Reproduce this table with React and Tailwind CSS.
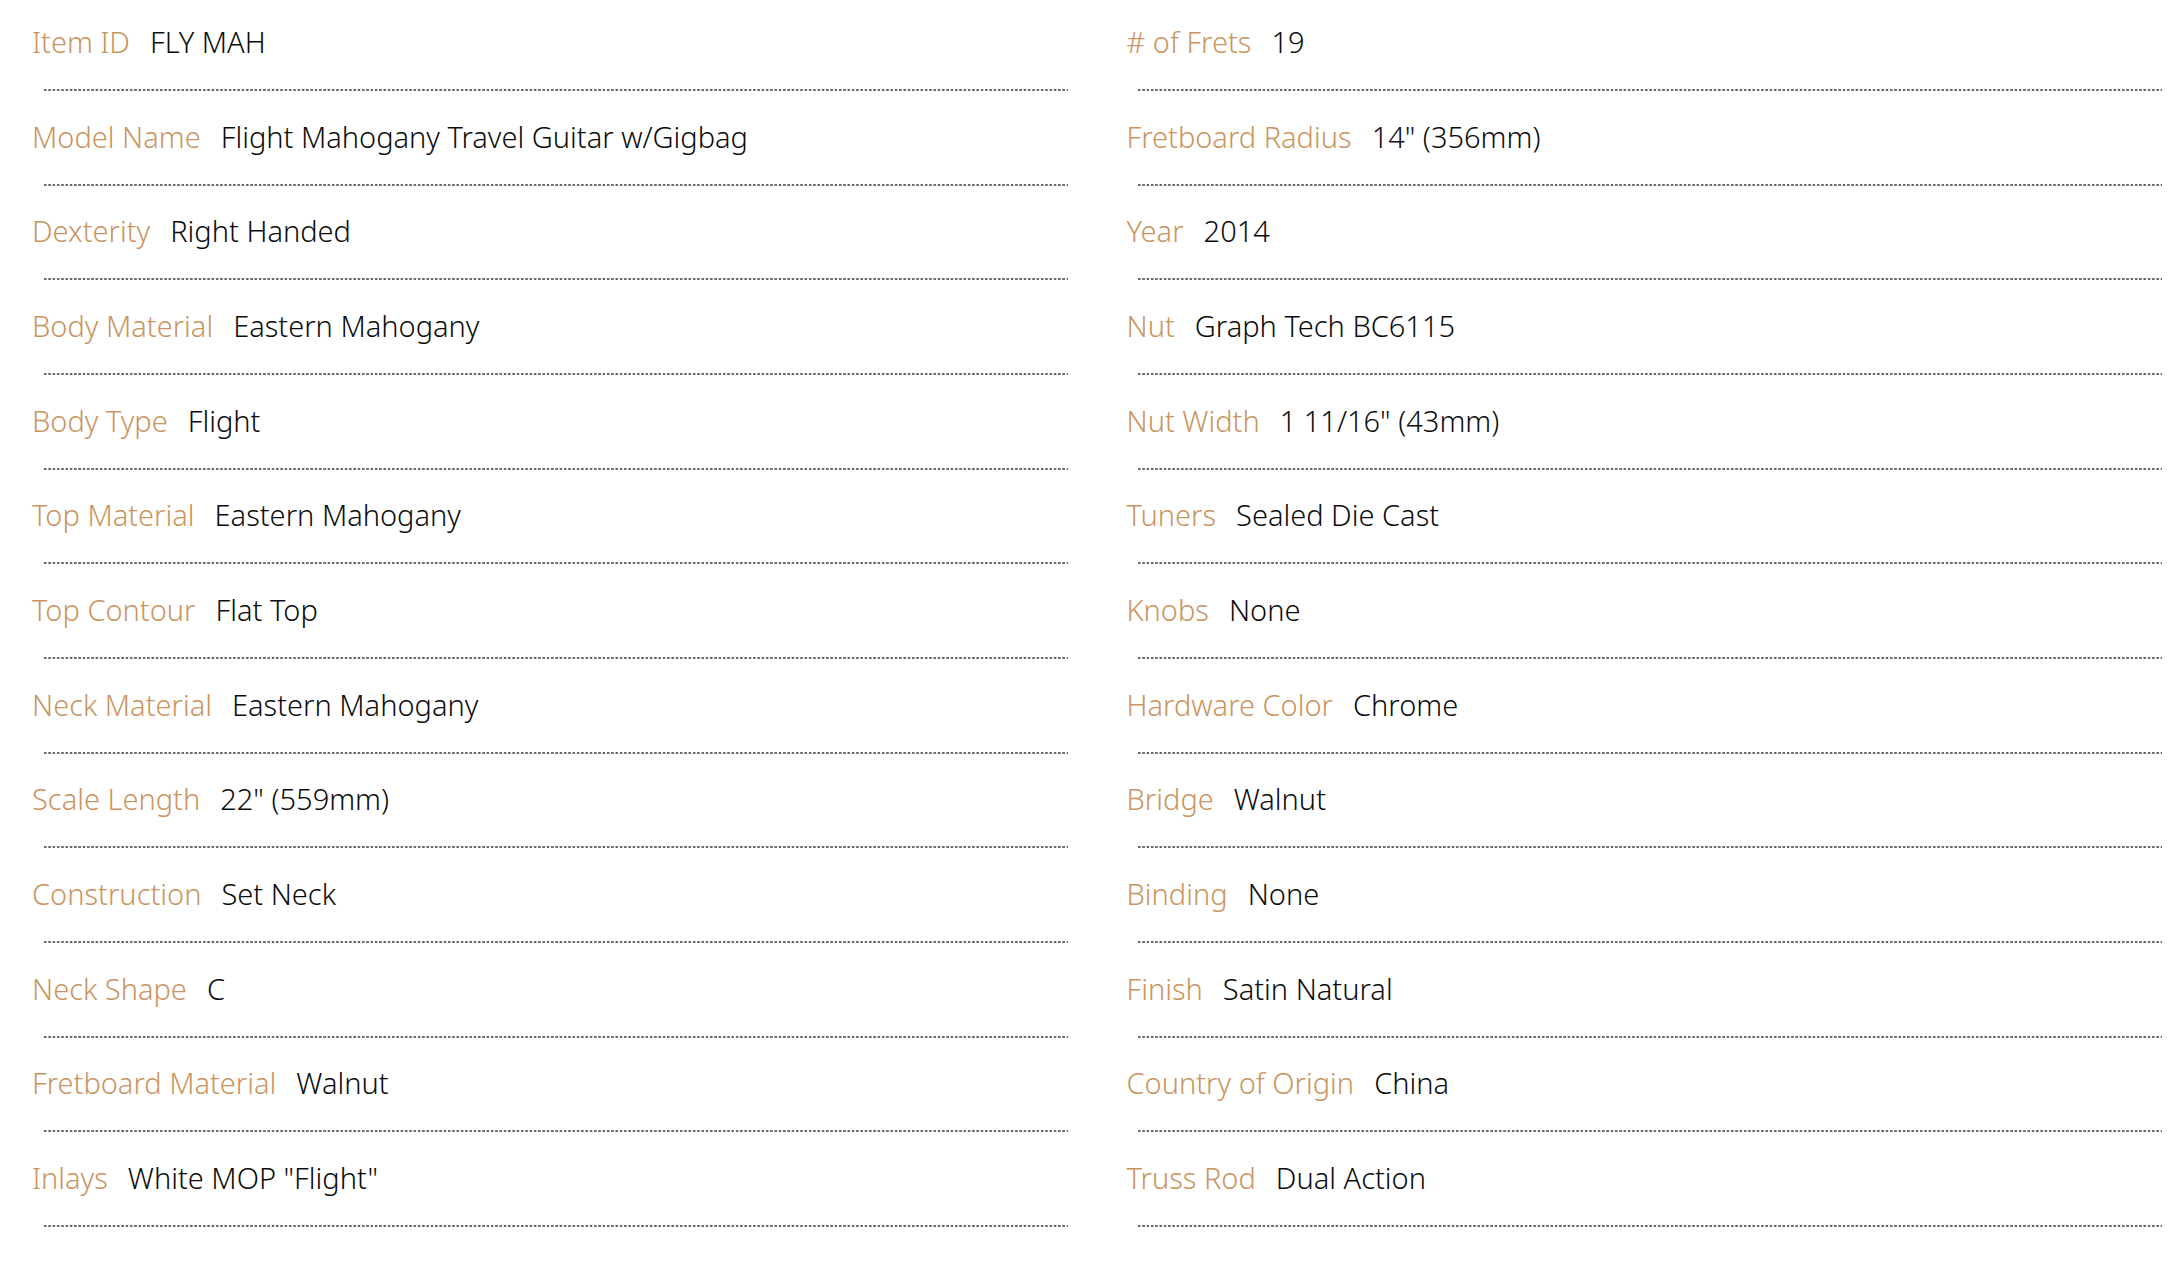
const left = [
  ["Item ID", "FLY MAH"],
  ["Model Name", "Flight Mahogany Travel Guitar w/Gigbag"],
  ["Dexterity", "Right Handed"],
  ["Body Material", "Eastern Mahogany"],
  ["Body Type", "Flight"],
  ["Top Material", "Eastern Mahogany"],
  ["Top Contour", "Flat Top"],
  ["Neck Material", "Eastern Mahogany"],
  ["Scale Length", "22\" (559mm)"],
  ["Construction", "Set Neck"],
  ["Neck Shape", "C"],
  ["Fretboard Material", "Walnut"],
  ["Inlays", "White MOP \"Flight\""],
];
const right = [
  ["# of Frets", "19"],
  ["Fretboard Radius", "14\" (356mm)"],
  ["Year", "2014"],
  ["Nut", "Graph Tech BC6115"],
  ["Nut Width", "1 11/16\" (43mm)"],
  ["Tuners", "Sealed Die Cast"],
  ["Knobs", "None"],
  ["Hardware Color", "Chrome"],
  ["Bridge", "Walnut"],
  ["Binding", "None"],
  ["Finish", "Satin Natural"],
  ["Country of Origin", "China"],
  ["Truss Rod", "Dual Action"],
];

function Row({ label, value, indent }) {
  return (
    <div className="flex flex-col">
      <div className="flex h-[40px] items-baseline whitespace-nowrap leading-[40px]">
        <span className="text-[29px] font-light text-[#c9955f]">{label}</span>
        <span className="ml-[20px] text-[29px] font-[350] text-[#0c0c0c]">{value}</span>
      </div>
      <div
        className={`mt-[27px] mb-[25.67px] h-[2px] ${indent} bg-[linear-gradient(to_right,#6b6b6b_0_3px,transparent_3px_4.3px)] bg-[length:4.3px_2px] bg-repeat-x`}
      />
    </div>
  );
}

export default function App() {
  return (
    <div
      className="min-h-[1272px] w-[2184px] bg-white pl-[32px] pr-[22px] pt-[22px]"
      style={{ fontFamily: '"Noto Sans", "Open Sans", sans-serif' }}
    >
      <div className="grid grid-cols-2 gap-x-[59px]">
        <div className="flex flex-col">
          {left.map(([l, v]) => (
            <Row key={l} label={l} value={v} indent="ml-[12px]" />
          ))}
        </div>
        <div className="flex flex-col">
          {right.map(([l, v]) => (
            <Row key={l} label={l} value={v} indent="ml-[11px]" />
          ))}
        </div>
      </div>
    </div>
  );
}
